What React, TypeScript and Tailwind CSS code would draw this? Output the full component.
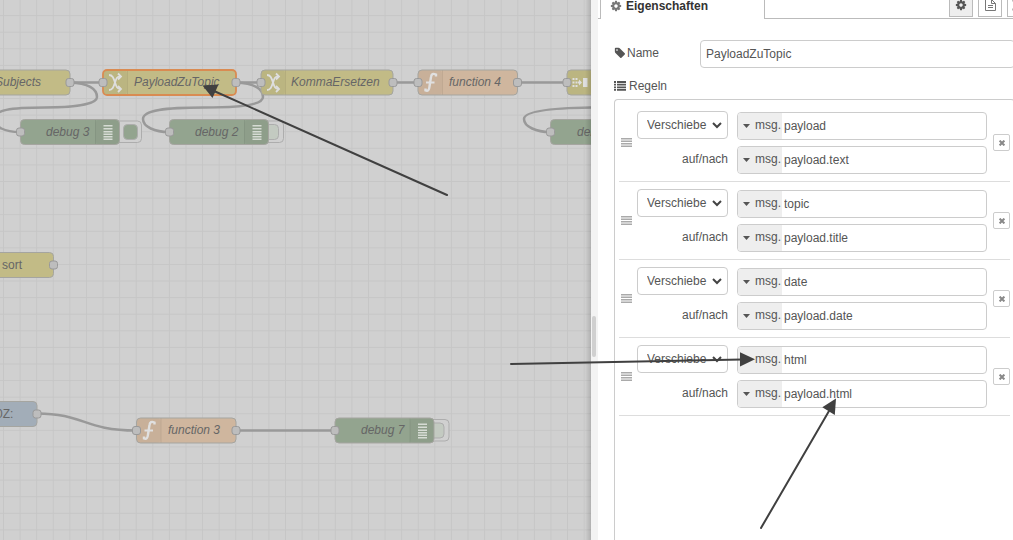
import { useState } from "react";

type Rule = { id: number; from: string; to: string };

const INITIAL_RULES: Rule[] = [
  { id: 1, from: "payload", to: "payload.text" },
  { id: 2, from: "topic", to: "payload.title" },
  { id: 3, from: "date", to: "payload.date" },
  { id: 4, from: "html", to: "payload.html" },
];

const YELLOW = "#c2bb86";
const PEACH = "#cfb69e";
const GREEN = "#93a48f";
const BLUE = "#a2adb8";
const NODE_H = 25;

type NodeProps = {
  x: number;
  y: number;
  w: number;
  fill: string;
  label: string;
  labelX: number;
  icon?: "change" | "function" | "split" | "debug";
  input?: boolean;
  output?: boolean;
  selected?: boolean;
  upright?: boolean;
  active?: boolean;
};

function Port({ x, y }: { x: number; y: number }) {
  return <rect x={x - 4} y={y - 4} width="8" height="8" rx="2.5" fill="#bdbdbd" stroke="#999" />;
}

function NodeIcon({ kind }: { kind: NodeProps["icon"] }) {
  if (kind === "change") {
    return (
      <g stroke="#dedede" strokeWidth="1.8" fill="none">
        <path d="M6 5C9.5 5 10.500 8 12 12.500S14 19 17.500 19" />
        <path d="M6 20C9.500 20 10.500 17 12 12.500S14 6.500 17.500 6.500" />
        <path d="M15 3.500L18 6.500L15 9.500M15 16L18 19L15 22" strokeWidth="1.800" />
      </g>
    );
  }
  if (kind === "function") {
    return (
      <g stroke="#e0e0e0" fill="none">
        <path d="M18 6.5V4.5Q13.5 2.5 13 7L11.5 16.5Q11 22 7.5 20.5V18.5" strokeWidth="2.4" />
        <path d="M8 12.5H16.5" strokeWidth="2" />
      </g>
    );
  }
  if (kind === "split") {
    return (
      <g fill="#dedede">
        {[8, 11.5, 15].map((y) => (
          <g key={y}>
            <rect x="5.5" y={y} width="2" height="2" />
            <rect x="8.5" y={y} width="2" height="2" />
          </g>
        ))}
        <path d="M11 11.5h1v-2l3 3l-3 3v-2h-1z" />
        <rect x="16" y="8" width="4.5" height="9" />
      </g>
    );
  }
  return (
    <g fill="#d6dbd4">
      {[5.5, 8.5, 11.5, 14, 16.5, 19].map((y) => (
        <rect key={y} x="8" y={y} width="9" height="1.5" />
      ))}
    </g>
  );
}

function FlowNode(props: NodeProps) {
  const { x, y, w, fill, label, labelX, icon, input, output, selected, upright, active } = props;
  const right = icon === "debug";
  const iconX = right ? x + w - 24 : x;
  return (
    <g>
      {right && (
        <g stroke="#adadad">
          <rect
            x={x + w - 10}
            y={y + 1.5}
            width={active ? 32 : 25}
            height="21.5"
            rx="4"
            fill="#d0d0d0"
          />
          <rect
            x={active ? x + w + 4 : x + w - 4}
            y={y + 5}
            width="14"
            height="15"
            rx="4"
            fill={active ? GREEN : "#c3cac1"}
          />
        </g>
      )}
      <rect x={x} y={y} width={w} height={NODE_H} rx="4" fill={fill} />
      {icon && (
        <g>
          <rect x={iconX} y={y} width="24" height={NODE_H} rx="4" fill="#000" fillOpacity="0.03" />
          <path d={`M${right ? iconX : x + 24.5} ${y}v${NODE_H}`} stroke="#000" strokeOpacity="0.07" />
          <g transform={`translate(${iconX} ${y})`}>
            <NodeIcon kind={icon} />
          </g>
        </g>
      )}
      <rect
        x={x}
        y={y}
        width={w}
        height={NODE_H}
        rx="4"
        fill="none"
        stroke={selected ? "#d98b52" : "#a5a5a0"}
        strokeWidth={selected ? 1.8 : 1}
      />
      <text x={labelX} y={y + 16} fontSize="12" fontStyle={upright ? "normal" : "italic"} fill="#666">
        {label}
      </text>
      {input && <Port x={x} y={y + 12.5} />}
      {output && <Port x={x + w} y={y + 12.5} />}
    </g>
  );
}

function FlowCanvas() {
  return (
    <main className="relative min-w-0 flex-1 overflow-hidden bg-[#d0d0d0]">
      <svg className="block h-full w-full" aria-label="Flow">
        <defs>
          <pattern id="grid" x="3" y="15.1" width="16.59" height="16.59" patternUnits="userSpaceOnUse">
            <path d="M0.5 0V16.6M0 0.5H16.6" stroke="#c6c6c6" fill="none" />
          </pattern>
        </defs>
        <rect width="100%" height="100%" fill="url(#grid)" />
        <g fill="none" stroke="#999" strokeWidth="2.5">
          <path d="M70 82.5H103M236 82.5H261M393 82.5H418M517 82.5H567M236 430.5H335" />
          <path d="M70 82.5C88 83 97 89 97 97C97 105 70 107.5 45 107.5C10 107.5-6 110-6 119C-6 127 5 132 20 132" />
          <path d="M236 82.5C254 83 263 89 263 97C263 105 240 107.5 204 107.5C165 107.5 143 110 143 119C143 127 155 132 169 132" />
          <path d="M605 107.5C560 107.5 524 110 524 119C524 127 537 132 550 132" />
          <path d="M37 413.5C84 413.5 84 430.5 136 430.5" />
        </g>
        <FlowNode x={-60} y={70} w={130} fill={YELLOW} label="Subjects" labelX={-5} output />
        <FlowNode x={103} y={70} w={133} fill={YELLOW} label="PayloadZuTopic" labelX={134} icon="change" input output selected />
        <FlowNode x={261} y={70} w={132} fill={YELLOW} label="KommaErsetzen" labelX={291} icon="change" input output />
        <FlowNode x={418} y={70} w={99.5} fill={PEACH} label="function 4" labelX={449} icon="function" input output />
        <FlowNode x={567} y={70} w={100} fill={YELLOW} label="" labelX={600} icon="split" input />
        <FlowNode x={20.5} y={119.5} w={99} fill={GREEN} label="debug 3" labelX={46} icon="debug" input active />
        <FlowNode x={169.5} y={119.5} w={99} fill={GREEN} label="debug 2" labelX={195} icon="debug" input />
        <FlowNode x={550.5} y={119.5} w={99} fill={GREEN} label="debug 4" labelX={577} icon="debug" input />
        <FlowNode x={-60} y={252.5} w={113.5} fill={YELLOW} label="sort" labelX={2} output upright />
        <FlowNode x={-60} y={401.5} w={97} fill={BLUE} label="0Z:" labelX={-4} output upright />
        <FlowNode x={136.5} y={418} w={99.5} fill={PEACH} label="function 3" labelX={168} icon="function" input output />
        <FlowNode x={335} y={418} w={99} fill={GREEN} label="debug 7" labelX={361} icon="debug" input />
      </svg>
      <div className="absolute inset-y-0 right-0 w-1.5 bg-gradient-to-r from-transparent to-black/15" />
    </main>
  );
}

function CogIcon({ className }: { className: string }) {
  return (
    <svg viewBox="0 0 1792 1792" className={className} fill="currentColor" aria-hidden="true">
      <path d="M1152 896q0-106-75-181t-181-75-181 75-75 181 75 181 181 75 181-75 75-181zm512-109v222q0 12-8 23t-20 13l-185 28q-19 54-39 91 35 50 107 138 10 12 10 25t-9 23q-27 37-99 108t-94 71q-12 0-26-9l-138-108q-44 23-91 38-16 136-29 186-7 28-36 28h-222q-14 0-24.5-8.5t-11.5-21.5l-28-184q-49-16-90-37l-141 107q-10 9-25 9-14 0-25-11-126-114-165-168-7-10-7-23 0-12 8-23 15-21 51-66.5t54-70.5q-27-50-41-99l-183-27q-13-2-21-12.5t-8-23.5v-222q0-12 8-23t19-13l186-28q14-46 39-92-40-57-107-138-10-12-10-24 0-10 9-23 26-36 98.5-107.5t94.5-71.5q13 0 26 10l138 107q44-23 91-38 16-136 29-186 7-28 36-28h222q14 0 24.5 8.5t11.5 21.5l28 184q49 16 90 37l142-107q9-9 24-9 13 0 25 10 129 119 165 170 7 8 7 22 0 12-8 23-15 21-51 66.5t-54 70.5q26 50 41 98l183 28q13 2 21 12.5t8 23.5z" />
    </svg>
  );
}

function TagIcon() {
  return (
    <svg viewBox="0 0 1792 1792" className="size-3" fill="currentColor" aria-hidden="true">
      <path d="M576 448q0-53-37.5-90.5t-90.5-37.5-90.5 37.5-37.5 90.5 37.5 90.5 90.5 37.5 90.5-37.5 37.5-90.5zm1067 576q0 53-37 90l-491 492q-39 37-91 37-53 0-90-37l-715-716q-38-37-64.5-101t-26.5-117v-416q0-52 38-90t90-38h416q53 0 117 26.5t102 64.5l715 714q37 39 37 91z" />
    </svg>
  );
}

function ListIcon() {
  return (
    <svg viewBox="0 0 12 10" className="h-2.5 w-3" fill="currentColor" aria-hidden="true">
      <path d="M0 0h2v2H0zM3 0h9v2H3zM0 2.7h2v1.8H0zM3 2.7h9v1.8H3zM0 5.4h2v1.8H0zM3 5.4h9v1.8H3zM0 8h2v1.8H0zM3 8h9v1.8H3z" />
    </svg>
  );
}

function TypedInput({ label, value, onChange }: { label: string; value: string; onChange: (v: string) => void }) {
  return (
    <div className="flex h-7 overflow-hidden rounded border border-[#ccc] bg-white">
      <button type="button" className="flex w-11 shrink-0 items-center gap-[5px] bg-[#eee] pb-0.5 pl-[5px]">
        <svg viewBox="0 0 7 4" className="mt-0.5 h-1 w-[7px]" fill="currentColor" aria-hidden="true">
          <path d="M0 0h7L3.5 4z" />
        </svg>
        msg.
      </button>
      <input
        aria-label={label}
        value={value}
        onChange={(e) => onChange(e.target.value)}
        className="min-w-0 flex-1 px-0.5 outline-none"
      />
    </div>
  );
}

function RuleRow({ rule, onChange, onRemove }: { rule: Rule; onChange: (r: Rule) => void; onRemove: () => void }) {
  return (
    <li className="flex items-center border-b border-[#ddd] pl-0.5">
      <svg viewBox="0 0 11 10" className="mr-[5px] h-2.5 w-[11px] shrink-0" fill="#aaa" aria-hidden="true">
        <path d="M0 0h11v1.5H0zM0 2.5h11V4H0zM0 5h11v1.5H0zM0 7.5h11V9H0z" />
      </svg>
      <div className="flex w-[91px] shrink-0 flex-col gap-1.5 pt-[7px] pb-2">
        <div className="relative">
          <select
            aria-label="Aktion"
            defaultValue="move"
            className="block h-7 w-full appearance-none rounded border border-[#ccc] bg-white pl-[9px] outline-none"
          >
            <option value="move">Verschiebe</option>
            <option value="set">Setze</option>
            <option value="change">Ändere</option>
            <option value="delete">Lösche</option>
          </select>
          <svg
            viewBox="0 0 10 7"
            className="pointer-events-none absolute top-[11px] right-1.5 h-[7px] w-2.5"
            fill="none"
            stroke="#444"
            strokeWidth="2"
            aria-hidden="true"
          >
            <path d="M1 1l4 4l4-4" />
          </svg>
        </div>
        <span className="flex h-7 items-center justify-end">auf/nach</span>
      </div>
      <div className="ml-[9px] flex min-w-0 flex-1 flex-col gap-1.5 pt-2 pb-[7px]">
        <TypedInput label="Quelle" value={rule.from} onChange={(from) => onChange({ ...rule, from })} />
        <TypedInput label="auf/nach" value={rule.to} onChange={(to) => onChange({ ...rule, to })} />
      </div>
      <button
        type="button"
        aria-label="Regel entfernen"
        onClick={onRemove}
        className="ml-1.5 flex size-[17px] shrink-0 items-center justify-center rounded-xs border border-[#ccc] bg-white"
      >
        <svg viewBox="0 0 6 6" className="size-1.5" stroke="#888" strokeWidth="2" aria-hidden="true">
          <path d="M0.6 0.6l4.8 4.8M5.4 0.6L0.6 5.4" />
        </svg>
      </button>
    </li>
  );
}

function EditorTabs() {
  return (
    <header className="-mr-[18px] flex h-[19px] items-end">
      <div className="h-full w-0.5 border-b border-[#bbb]" />
      <button
        type="button"
        className="flex h-full w-[165px] items-start gap-1 border-x border-[#bbb] pl-[9px] font-bold leading-3 text-[#333]"
      >
        <CogIcon className="size-3 text-[#777]" />
        Eigenschaften
      </button>
      <div className="flex h-full flex-1 items-end justify-end gap-[5px] border-b border-[#bbb] pb-px">
        <button type="button" aria-label="Eigenschaften" className="flex size-6 items-center justify-center border border-[#bbb] bg-[#eee]">
          <CogIcon className="size-3" />
        </button>
        <button type="button" aria-label="Beschreibung" className="flex size-6 items-center justify-center border border-[#bbb] bg-white">
          <svg viewBox="0 0 11 12" className="h-3 w-[11px]" fill="none" stroke="#777" aria-hidden="true">
            <path d="M0.5 0.5H6.5L10.5 4.5V11.5H0.5zM6.5 0.5V4.5H10.5M3 6.5H8M3 8.5H8" />
          </svg>
        </button>
        <button type="button" aria-label="Darstellung" className="flex size-6 items-center justify-center border border-[#bbb] bg-white">
          <svg viewBox="0 0 14 12" className="h-3 w-3.5" fill="none" stroke="#777" aria-hidden="true">
            <path d="M2.5 2.5V9.5M11.5 2.5V9.5M4 1.5H10M4 10.5H10M1 0.5h3v2h-3zM10 0.5h3v2h-3zM1 9.5h3v2h-3zM10 9.5h3v2h-3z" />
          </svg>
        </button>
      </div>
    </header>
  );
}

function Annotations() {
  return (
    <svg className="pointer-events-none absolute inset-0 h-full w-full" aria-hidden="true">
      <g stroke="#404040" strokeWidth="2" strokeLinecap="round">
        <path d="M447 195L214 91M511 364L742 359.5M761 528L829 411" />
      </g>
      <g fill="#404040">
        <path d="M202.5 85.5L218.5 84.5L212.5 98z" />
        <path d="M755 359.3L740 352.3V366.5z" />
        <path d="M836 398.5L822.3 407.3L834.8 415z" />
      </g>
    </svg>
  );
}

export default function App() {
  const [name, setName] = useState("PayloadZuTopic");
  const [rules, setRules] = useState(INITIAL_RULES);

  return (
    <div className="relative flex h-screen overflow-hidden bg-white font-['Liberation_Sans',Arial,sans-serif] text-xs text-[#555]">
      <FlowCanvas />
      <div className="w-[7px] shrink-0 bg-[#f3f3f3] pt-79 pl-px">
        <div className="h-[41px] w-1 rounded-sm bg-[#d0d0d0]" />
      </div>
      <aside className="flex w-[415px] shrink-0 flex-col">
        <EditorTabs />
        <form className="-mr-0.5 flex flex-1 flex-col pt-[21px] pl-4" onSubmit={(e) => e.preventDefault()}>
          <div className="flex">
            <label htmlFor="node-name" className="flex h-[26px] w-[86px] shrink-0 items-center gap-px">
              <TagIcon />
              Name
            </label>
            <input
              id="node-name"
              value={name}
              onChange={(e) => setName(e.target.value)}
              className="h-7 min-w-0 flex-1 rounded border border-[#ccc] px-[5px] outline-none"
            />
          </div>
          <div className="mt-2.5 flex h-4 items-center gap-[3px]">
            <ListIcon />
            Regeln
          </div>
          <ol className="mt-[5px] flex-1 rounded-t border border-b-0 border-[#ccc] p-1">
            {rules.map((rule) => (
              <RuleRow
                key={rule.id}
                rule={rule}
                onChange={(next) => setRules(rules.map((r) => (r.id === next.id ? next : r)))}
                onRemove={() => setRules(rules.filter((r) => r.id !== rule.id))}
              />
            ))}
          </ol>
        </form>
      </aside>
      <Annotations />
    </div>
  );
}
